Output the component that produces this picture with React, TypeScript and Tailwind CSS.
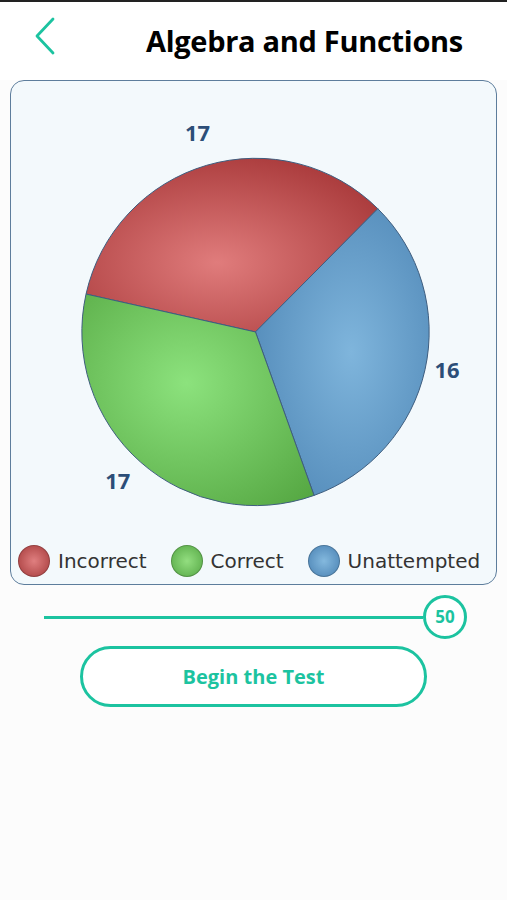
const cx = 245;
const cy = 251;
const r = 174;

const pt = (deg: number) => {
  const a = (deg * Math.PI) / 180;
  return `${(cx + r * Math.cos(a)).toFixed(1)} ${(cy + r * Math.sin(a)).toFixed(1)}`;
};

const slice = (from: number, to: number) =>
  `M ${cx} ${cy} L ${pt(from)} A ${r} ${r} 0 0 1 ${pt(to)} Z`;

const legend = [
  { label: "Incorrect", grad: "from-[#e07f80] to-[#a53a3c]" },
  { label: "Correct", grad: "from-[#93de80] to-[#55a844]" },
  { label: "Unattempted", grad: "from-[#84b9de] to-[#4a82b3]" },
];

const PieChart = () => (
  <svg viewBox="0 0 486 460" className="block w-full h-[460px]">
    <defs>
      <radialGradient id="gRed" cx="0.45" cy="0.6" r="0.7">
        <stop offset="0" stopColor="#e07c7c" />
        <stop offset="1" stopColor="#a63637" />
      </radialGradient>
      <radialGradient id="gBlue" cx="0.55" cy="0.5" r="0.75">
        <stop offset="0" stopColor="#7fb5dc" />
        <stop offset="1" stopColor="#4a82b2" />
      </radialGradient>
      <radialGradient id="gGreen" cx="0.45" cy="0.42" r="0.75">
        <stop offset="0" stopColor="#8ce27d" />
        <stop offset="1" stopColor="#56a843" />
      </radialGradient>
    </defs>
    <path d={slice(192.6, 314.8)} fill="url(#gRed)" stroke="#3e5d7e" strokeWidth="1" />
    <path d={slice(314.8, 430.3)} fill="url(#gBlue)" stroke="#3e5d7e" strokeWidth="1" />
    <path d={slice(70.3, 192.6)} fill="url(#gGreen)" stroke="#3e5d7e" strokeWidth="1" />
    <g fill="#2c4e78" fontFamily="'Open Sans', sans-serif" fontWeight="700" fontSize="22" textAnchor="middle">
      <text x="187" y="60">17</text>
      <text x="437" y="297">16</text>
      <text x="107" y="408">17</text>
    </g>
  </svg>
);

export default function App() {
  return (
    <div className="min-h-[900px] w-full bg-[#fcfcfc] font-['Open_Sans',sans-serif]">
      <div className="h-[2px] bg-[#222]" />
      <header className="relative flex h-[78px] items-center bg-white pl-[146px]">
        <button className="absolute left-[30px] top-[11px] p-1">
          <svg width="22" height="38" viewBox="0 0 22 38" fill="none">
            <path d="M19 2 L3 19 L19 36" stroke="#1cc3a0" strokeWidth="2.8" strokeLinecap="round" strokeLinejoin="round" />
          </svg>
        </button>
        <h1 className="text-[29px] font-bold tracking-[-0.3px] text-black">Algebra and Functions</h1>
      </header>

      <div className="mx-[10px] rounded-[14px] border-[1.5px] border-[#5d7d9c] bg-[#f3f9fc] pb-[7px]">
        <PieChart />
        <div className="mt-[4px] flex items-center gap-[24px] pl-[7px]">
          {legend.map((item) => (
            <div key={item.label} className="flex items-center">
              <span className={`size-[32px] rounded-full bg-radial ${item.grad} border border-black/20`} />
              <span className="ml-[8px] font-['DejaVu_Sans',sans-serif] text-[20px] text-[#333]">{item.label}</span>
            </div>
          ))}
        </div>
      </div>

      <div className="flex items-center pl-[44px] pr-[40px] pt-[10px]">
        <div className="h-[3px] flex-1 bg-[#1cc3a0]" />
        <div className="flex size-[44px] items-center justify-center rounded-full border-[3px] border-[#1cc3a0] bg-white text-[17px] font-bold text-[#1cc3a0]">
          50
        </div>
      </div>

      <div className="flex justify-center pt-[7px]">
        <button className="flex h-[61px] w-[347px] items-center justify-center rounded-full border-[3px] border-[#1cc3a0] bg-white text-[20px] font-bold text-[#1cc3a0]">
          Begin the Test
        </button>
      </div>
    </div>
  );
}
